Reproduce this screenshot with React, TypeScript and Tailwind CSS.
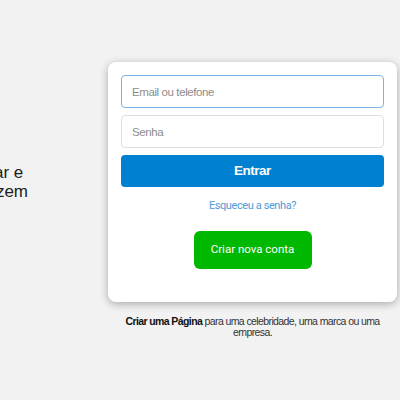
export default function App() {
  return (
    <div className="w-[400px] h-[400px] overflow-hidden bg-[#f2f2f2] flex flex-col">
      <div className="flex items-start pt-[62px]">
        {/* left intro, pushed mostly off-screen */}
        <div className="w-[108px] shrink-0 h-[240px] flex items-center justify-end pr-[80px]">
          <p className="shrink-0 text-[17px] leading-[19px] text-[#1c1e21] font-['Liberation_Sans',Arial,sans-serif] whitespace-nowrap">
            <span className="block">O Facebook ajuda você a se conectar e</span>
            <span className="block">compartilhar com as pessoas que fazem</span>
          </p>
        </div>

        <div className="flex flex-col w-[289px] shrink-0">
          <div className="bg-white rounded-lg shadow-[0_2px_8px_rgba(0,0,0,0.3)] px-[13px] pt-[13px] pb-[33px] flex flex-col">
            <input
              placeholder="Email ou telefone"
              className="h-[33px] w-full rounded-[4px] border border-[#7fb3e6] px-[10px] text-[11.5px] tracking-[-0.4px] text-[#1c1e21] placeholder:text-[#8c8c8c] outline-none font-['Liberation_Sans',Arial,sans-serif]"
            />
            <input
              placeholder="Senha"
              type="password"
              className="mt-[7px] h-[33px] w-full rounded-[4px] border border-[#dddfe2] px-[10px] text-[11.5px] tracking-[-0.4px] placeholder:text-[#8c8c8c] outline-none font-['Liberation_Sans',Arial,sans-serif]"
            />
            <button className="mt-[7px] h-[32px] w-full rounded-[4px] bg-[#0080d0] text-white font-bold text-[13.5px] tracking-[-0.5px] font-['Liberation_Sans',Arial,sans-serif]">
              Entrar
            </button>
            <a className="mt-[12px] text-center text-[11px] leading-[14px] tracking-[-0.4px] text-[#4f9ad8] font-['Roboto',sans-serif]">
              Esqueceu a senha?
            </a>
            <div className="mt-[18px] flex justify-center">
              <button className="w-[118px] h-[38px] rounded-[6px] bg-[#00b800] text-white text-[11.5px] font-normal font-['Roboto',sans-serif]">
                Criar nova conta
              </button>
            </div>
          </div>
          <p className="mt-[14px] px-[14px] text-center text-[10.5px] leading-[11px] tracking-[-0.6px] text-[#333] font-['Liberation_Sans',Arial,sans-serif]">
            <span className="font-bold text-[#111]">Criar uma Página</span> para uma celebridade, uma marca ou uma empresa.
          </p>
        </div>
      </div>
    </div>
  );
}
